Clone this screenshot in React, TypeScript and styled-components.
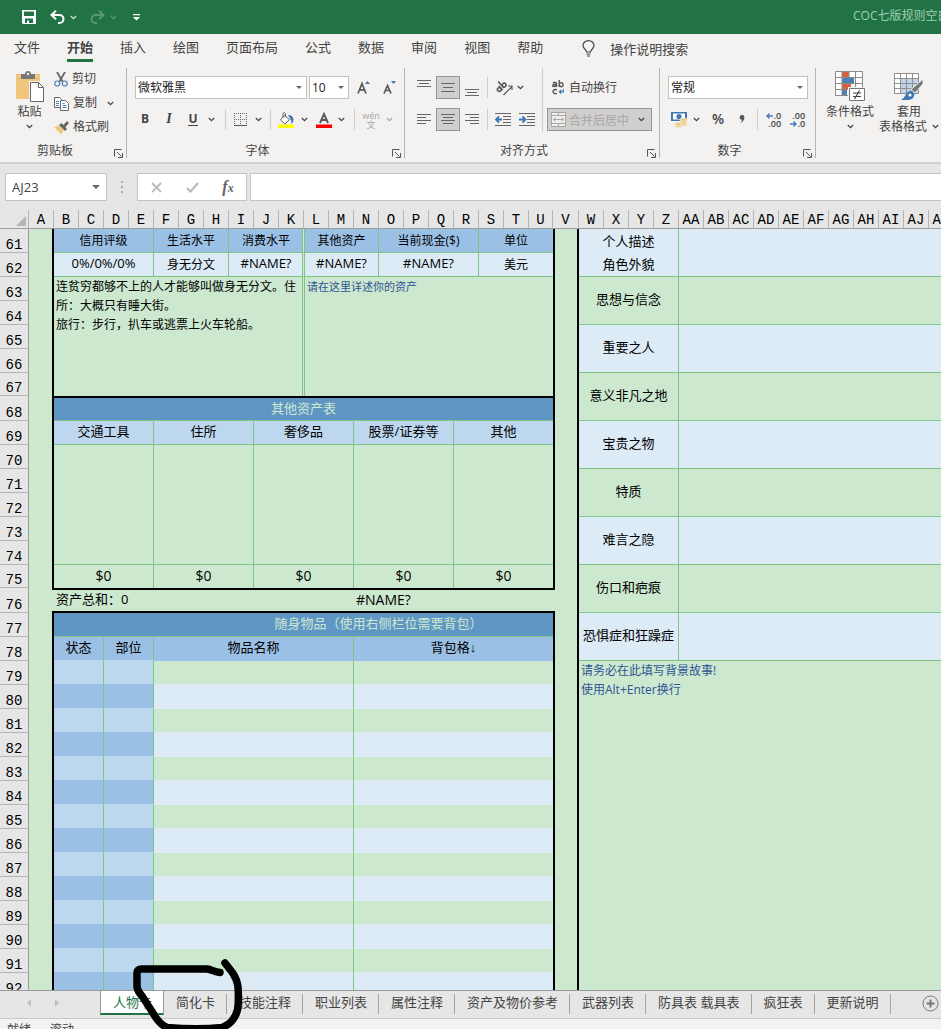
import React from "react";
import styled, { createGlobalStyle, css } from "styled-components";

const GREEN = "#217346";
const LINE = "#7fc588";
const C = {
  paper: "#cce8cf",
  mid: "#9bc0e6",
  light: "#bdd7ee",
  pale: "#ddebf7",
  title: "#6096c4",
  ink: "#305496",
};

const GlobalStyle = createGlobalStyle`
  *, *::before, *::after { box-sizing: border-box; }
  body {
    margin: 0;
    font-family: "Open Sans", "Liberation Sans", "Noto Sans CJK SC", sans-serif;
    font-size: 12px;
    color: #444;
    background: #e6e6e6;
  }
  button, input, select {
    font: inherit;
    color: inherit;
    margin: 0;
    padding: 0;
    border: 0;
    background: none;
    outline: none;
  }
  svg { display: block; flex: none; }
`;

const Window = styled.div`
  position: relative;
  display: flex;
  flex-direction: column;
  height: 100vh;
  overflow: hidden;
`;

/* ---------- title bar ---------- */

const TitleBar = styled.header`
  display: flex;
  align-items: center;
  flex: none;
  height: 34px;
  padding-left: 14px;
  background: ${GREEN};
  color: #fff;
`;

const QuickButton = styled.button<{ $w: number; $dim?: boolean; $start?: boolean }>`
  display: flex;
  align-items: center;
  justify-content: ${(p) => (p.$start ? "flex-start" : "center")};
  flex: none;
  width: ${(p) => p.$w}px;
  height: 24px;
  opacity: ${(p) => (p.$dim ? 0.25 : 1)};
`;

const DocTitle = styled.div`
  width: 88px;
  margin-left: auto;
  overflow: hidden;
  white-space: nowrap;
  line-height: 18px;
  padding-bottom: 3px;
  color: #9fcfb2;
`;

/* ---------- ribbon ---------- */

const RibbonTabs = styled.nav`
  display: flex;
  align-items: flex-start;
  gap: 27px;
  flex: none;
  height: 34px;
  padding: 4px 14px 0;
  background: #f3f2f1;
  font-size: 13px;
  white-space: nowrap;
`;

const RibbonTab = styled.button<{ $active?: boolean }>`
  flex: none;
  height: 24px;
  padding-bottom: 3px;
  line-height: 18px;
  border-bottom: 3px solid ${(p) => (p.$active ? GREEN : "transparent")};
  font-weight: ${(p) => (p.$active ? 700 : 400)};
`;

const TellMe = styled.button`
  display: flex;
  align-items: center;
  gap: 15px;
  height: 20px;
  margin-left: 12px;
`;

const Ribbon = styled.div`
  display: flex;
  flex: none;
  height: 96px;
  padding-bottom: 4px;
  background: #f3f2f1;
  border-bottom: 2px solid #d2d0ce;
  overflow: hidden;
`;

const Group = styled.section<{ $w?: number }>`
  display: flex;
  flex-direction: column;
  flex: ${(p) => (p.$w ? `0 0 ${p.$w}px` : "1 0 0")};
  border-right: ${(p) => (p.$w ? "1px solid #b5b3b1" : "0")};
`;

const GroupBody = styled.div<{ $pad?: number }>`
  display: flex;
  flex: 1;
  padding-left: ${(p) => p.$pad ?? 0}px;
`;

const GroupFooter = styled.div`
  display: flex;
  align-items: flex-end;
  height: 14px;
  text-align: center;
  line-height: 14px;
  padding-right: 2px;
  span { flex: 1; }
`;

const Launcher = styled.button`
  display: flex;
  align-items: flex-end;
  width: 14px;
  height: 14px;
  padding-left: 4px;
`;

const Rows = styled.div`
  display: flex;
  flex-direction: column;
  padding-top: 8px;
  gap: 9px;
`;

const ToolRow = styled.div<{ $gap?: number }>`
  display: flex;
  align-items: center;
  gap: ${(p) => p.$gap ?? 0}px;
  height: 23px;
`;

const Tool = styled.button<{ $w?: number; $on?: boolean; $dim?: boolean }>`
  display: flex;
  align-items: center;
  justify-content: center;
  flex: none;
  width: ${(p) => p.$w ?? 24}px;
  height: 23px;
  opacity: ${(p) => (p.$dim ? 0.45 : 1)};
  ${(p) =>
    p.$on &&
    css`
      background: #d0cfce;
      border: 1px solid #979593;
    `}
`;

const Letter = styled.span<{ $kind: "b" | "i" | "u" | "p" }>`
  font-size: 12px;
  line-height: 14px;
  font-weight: 700;
  padding-bottom: 2px;
  ${(p) =>
    p.$kind === "i" &&
    css`
      font-family: "Liberation Serif", serif;
      font-style: italic;
      font-size: 14px;
    `}
  ${(p) =>
    p.$kind === "u" &&
    css`
      padding-bottom: 0;
      line-height: 12px;
      border-bottom: 1px solid #444;
    `}
  ${(p) =>
    p.$kind === "p" &&
    css`
      font-size: 14px;
      font-weight: 600;
    `}
`;

const Rule = styled.span<{ $h?: number; $l?: number; $r?: number }>`
  flex: none;
  width: 1px;
  height: ${(p) => p.$h ?? 21}px;
  margin: 0 ${(p) => p.$r ?? 7}px 0 ${(p) => p.$l ?? 7}px;
  background: #cfcdcb;
`;

const Combo = styled.div<{ $w: number }>`
  display: flex;
  align-items: center;
  width: ${(p) => p.$w}px;
  height: 23px;
  padding: 0 4px 0 2px;
  background: #fff;
  border: 1px solid #c4c2c0;
  color: #222;
  select {
    flex: 1;
    min-width: 0;
    height: 21px;
    appearance: none;
  }
`;

const Triangle = styled.span<{ $s?: number }>`
  flex: none;
  border: ${(p) => p.$s ?? 3}px solid transparent;
  border-top-color: #666;
  border-bottom: 0;
`;

const BigButton = styled.button<{ $w: number }>`
  display: flex;
  flex-direction: column;
  align-items: center;
  width: ${(p) => p.$w}px;
  padding-top: 3px;
  line-height: 15px;
  white-space: nowrap;
  svg + span { margin-top: 2px; }
`;

const InlineLabel = styled.span`
  display: flex;
  align-items: center;
  gap: 5px;
  height: 15px;
`;

const ChevronSlot = styled.span`
  display: flex;
  align-items: center;
  height: 15px;
`;

const ClipList = styled.div`
  display: flex;
  flex-direction: column;
  padding-left: 7px;
`;

const ClipItem = styled.button`
  display: flex;
  align-items: center;
  height: 24px;
  gap: 4px;
  padding-bottom: 1px;
  white-space: nowrap;
  span { line-height: 16px; padding-bottom: 1px; }
  svg + span + svg { margin-left: 6px; }
`;

const WrapButton = styled.button`
  display: flex;
  align-items: center;
  gap: 5px;
  height: 23px;
  padding: 0 0 1px 5px;
`;

const MergeButton = styled.button`
  display: flex;
  align-items: center;
  width: 105px;
  height: 23px;
  padding: 0 6px 0 3px;
  gap: 3px;
  background: #d0cfce;
  border: 1px solid #979593;
  color: #a9a7a5;
  span { flex: 1; text-align: left; }
`;

const Pinyin = styled.span`
  display: flex;
  flex-direction: column;
  align-items: center;
  font-size: 9px;
  line-height: 9px;
`;

/* ---------- formula bar ---------- */

const FormulaBar = styled.div`
  display: flex;
  align-items: center;
  flex: none;
  height: 46px;
  padding: 0 0 0 5px;
  background: #e6e6e6;
`;

const NameBox = styled.div`
  display: flex;
  align-items: center;
  width: 102px;
  height: 28px;
  padding: 0 6px;
  background: #fff;
  border: 1px solid #c4c4c4;
  font-size: 13px;
  input { flex: 1; min-width: 0; }
`;

const Dots = styled.span`
  display: flex;
  flex-direction: column;
  gap: 3px;
  width: 30px;
  padding-left: 14px;
  i { width: 2px; height: 2px; background: #aaa; }
`;

const FxBox = styled.div`
  display: flex;
  align-items: center;
  width: 110px;
  height: 28px;
  background: #fff;
  border: 1px solid #c4c4c4;
`;

const Fx = styled.span`
  font: italic 700 16px/18px "Liberation Serif", serif;
  color: #666;
  small { font-size: 12px; }
`;

const FormulaInput = styled.input`
  && {
    flex: 1;
    min-width: 0;
    height: 28px;
    margin-left: 3px;
    padding: 0 6px;
    background: #fff;
    border: 1px solid #c4c4c4;
    border-right: 0;
  }
`;

/* ---------- grid ---------- */

const Pane = styled.main`
  flex: 1;
  min-height: 0;
  overflow: hidden;
  background: ${C.paper};
`;

const Grid = styled.table`
  table-layout: fixed;
  width: 1329px;
  border-collapse: separate;
  border-spacing: 0;
  color: #000;
`;

const SheetRow = styled.tr<{ $h: number }>`
  height: ${(p) => p.$h}px;
`;

const ColHead = styled.th`
  height: 19px;
  padding: 3px 0 0;
  background: #e6e6e6;
  border-right: 1px solid #b4b4b4;
  border-bottom: 1px solid #9c9c9c;
  font: 400 14px/15px "Liberation Mono", monospace;
  text-align: center;
`;

const Corner = styled(ColHead)`
  svg { margin: 0 2px 0 auto; }
`;

const RowHead = styled.th`
  padding: 8px 0 0;
  background: #e6e6e6;
  border-right: 1px solid #9c9c9c;
  border-bottom: 1px solid #b4b4b4;
  font: 400 14px/14px "Liberation Mono", monospace;
  text-align: center;
  vertical-align: bottom;
`;

type CellLook = {
  $bg?: string;
  $bottom?: string;
  $right?: string;
  $top?: string;
  $left?: string;
  $size?: number;
  $note?: boolean;
  $color?: string;
  $lh?: number;
  $double?: "start" | "end";
};

const Cell = styled.td<CellLook>`
  padding: ${(p) => (p.$note ? "0 0 0 2px" : p.$lh || p.$size === 12 ? "0" : "0 0 2px")};
  background: ${(p) => p.$bg ?? C.paper};
  border-top: ${(p) => p.$top ?? "0"};
  border-left: ${(p) => p.$left ?? "0"};
  border-right: ${(p) => p.$right ?? `1px solid ${LINE}`};
  border-bottom: ${(p) => p.$bottom ?? `1px solid ${LINE}`};
  color: ${(p) => p.$color ?? "#000"};
  font-size: ${(p) => p.$size ?? 13}px;
  line-height: ${(p) => p.$lh ?? 19}px;
  text-align: ${(p) => (p.$note ? "left" : "center")};
  vertical-align: ${(p) => (p.$note ? "top" : "middle")};
  white-space: pre-line;
  ${(p) =>
    p.$double === "start" &&
    css`
      border-right: 1px solid ${C.paper};
      box-shadow: inset -1px 0 ${LINE};
    `}
  ${(p) => p.$double === "end" && `border-left: 1px solid ${LINE};`}
`;

type Spec = CellLook & { t?: string; cs?: number; rs?: number };

const BLACK = "2px solid #000";
const NONE = "0";

/* paper with the ends of the two frame lines in its corners */
const frameEnds = (side: "left" | "right") =>
  `linear-gradient(#000, #000) ${side} top / 2px 2px no-repeat,
   linear-gradient(#000, #000) ${side} bottom / 2px 2px no-repeat, ${C.paper}`;

const columnName = (i: number) =>
  i < 26 ? String.fromCharCode(65 + i) : "A" + String.fromCharCode(65 + i - 26);
const columns = Array.from({ length: 52 }, (_, i) => columnName(i));
const columnWidth = (name: string) => (name === "U" ? 24 : name === "V" ? 26 : 25);
const rowNumbers = Array.from({ length: 32 }, (_, i) => 61 + i);

/* rows 68 and 76 carry the thick line above them */
const rowHeight = (n: number) =>
  n === 67 || n === 75 ? 23 : n === 68 || n === 76 ? 25 : 24;

const story = [
  "个人描述\n角色外貌",
  "思想与信念",
  "重要之人",
  "意义非凡之地",
  "宝贵之物",
  "特质",
  "难言之隐",
  "伤口和疤痕",
  "恐惧症和狂躁症",
];

const fiveUp = (texts: string[], look: Partial<Spec>): Spec[] =>
  texts.map((t, i) => ({ t, cs: 4, ...look, ...(i === 4 ? { $right: NONE } : {}) }));

const marginA: Spec = { $right: BLACK, $bottom: NONE };
const marginV: Spec = { $left: BLACK, $right: BLACK, $bottom: NONE };

function leftCells(row: number): Spec[] {
  switch (row) {
    case 61: {
      const h = { $bg: C.mid, $size: 12 };
      return [
        { ...marginA, rs: 15 },
        { t: "信用评级", cs: 4, ...h },
        { t: "生活水平", cs: 3, ...h },
        { t: "消费水平", cs: 3, ...h, $double: "start" },
        { t: "其他资产", cs: 3, ...h, $double: "end" },
        { t: "当前现金($)", cs: 4, ...h },
        { t: "单位", cs: 3, ...h, $right: NONE },
        { ...marginV, rs: 15 },
      ];
    }
    case 62: {
      const v = { $bg: C.pale };
      return [
        { t: "0%/0%/0%", cs: 4, ...v },
        { t: "身无分文", cs: 3, ...v, $size: 12 },
        { t: "#NAME?", cs: 3, ...v, $double: "start" },
        { t: "#NAME?", cs: 3, ...v, $double: "end" },
        { t: "#NAME?", cs: 4, ...v },
        { t: "美元", cs: 3, ...v, $size: 12, $right: NONE },
      ];
    }
    case 63:
      return [
        {
          t: "连贫穷都够不上的人才能够叫做身无分文。住所：大概只有睡大街。\n旅行：步行，扒车或逃票上火车轮船。",
          cs: 10, rs: 5, $note: true, $size: 12, $bottom: NONE, $double: "start",
        },
        {
          t: "请在这里详述你的资产",
          cs: 10, rs: 5, $note: true, $size: 11, $color: C.ink, $bottom: NONE, $right: NONE, $double: "end",
        },
      ];
    case 68:
      return [{ t: "其他资产表", cs: 20, $bg: C.title, $color: C.paper, $top: BLACK, $right: NONE }];
    case 69:
      return fiveUp(["交通工具", "住所", "奢侈品", "股票/证券等", "其他"], { $bg: C.light });
    case 70:
      return fiveUp(["", "", "", "", ""], { rs: 5 });
    case 75:
      return fiveUp(["$0", "$0", "$0", "$0", "$0"], { $bottom: NONE, $size: 14 });
    case 76: {
      const total = { $note: true, $right: NONE, $top: BLACK, $bottom: BLACK };
      return [
        { $right: NONE, $bottom: NONE, $bg: frameEnds("right") },
        { t: "资产总和：0", cs: 12, ...total },
        { t: "#NAME?", cs: 8, ...total, $size: 14 },
        { $right: BLACK, $bottom: NONE, $bg: frameEnds("left") },
      ];
    }
    case 77: {
      const bar = { $bg: C.title, $color: C.paper, $right: NONE };
      return [
        { ...marginA, rs: 16 },
        { cs: 6, ...bar },
        { t: "随身物品（使用右侧栏位需要背包）", cs: 14, ...bar },
        { ...marginV, rs: 16 },
      ];
    }
    case 78: {
      const h = { $bg: C.mid };
      const last = `1px solid ${C.mid}`;
      const next = `1px solid ${C.light}`;
      return [
        { t: "状态", cs: 2, ...h, $bottom: next },
        { t: "部位", cs: 2, ...h, $bottom: next },
        { t: "物品名称", cs: 8, ...h, $bottom: last },
        { t: "背包格↓", cs: 8, ...h, $bottom: last, $right: NONE },
      ];
    }
  }
  if (row >= 79) {
    const odd = row % 2 === 1;
    const slot = { $bg: odd ? C.light : C.mid, $bottom: `1px solid ${odd ? C.mid : C.light}` };
    const item = { $bg: odd ? C.paper : C.pale, $bottom: `1px solid ${C.pale}` };
    return [
      { cs: 2, ...slot },
      { cs: 2, ...slot },
      { cs: 8, ...item },
      { cs: 8, ...item, $right: NONE },
    ];
  }
  return [];
}

function rightCells(row: number): Spec[] {
  const i = (row - 61) / 2;
  if (row < 79 && Number.isInteger(i)) {
    const $bg = i % 2 ? C.paper : C.pale;
    return [
      { t: story[i], cs: 4, rs: 2, $bg, $lh: i === 0 ? 23 : undefined },
      { cs: 26, rs: 2, $bg },
    ];
  }
  if (row === 79) {
    return [
      {
        t: "请务必在此填写背景故事!\n使用Alt+Enter换行",
        cs: 30, rs: 14, $note: true, $size: 12, $color: C.ink, $bottom: NONE,
      },
    ];
  }
  return [];
}

/* ---------- sheet tabs and status bar ---------- */

const SheetBar = styled.nav`
  display: flex;
  align-items: flex-start;
  flex: none;
  height: 29px;
  background: #e6e6e6;
  border-top: 1px solid #999;
  border-bottom: 1px solid #c8c6c4;
  font-size: 13px;
  white-space: nowrap;
`;

const SheetNav = styled.div`
  display: flex;
  align-items: center;
  gap: 22px;
  width: 100px;
  height: 24px;
  padding-left: 26px;
  button { width: 6px; }
`;

const SheetTab = styled.button<{ $active?: boolean }>`
  display: flex;
  align-items: center;
  flex: none;
  height: 24px;
  padding: 0 12px 4px;
  position: relative;
  &::after {
    content: "";
    position: absolute;
    right: 0;
    top: 3px;
    width: 1px;
    height: 20px;
    background: #a3a3a3;
  }
  ${(p) =>
    p.$active &&
    css`
      padding-bottom: 2px;
      background: #fff;
      color: ${GREEN};
      border-left: 1px solid #999;
      border-bottom: 2px solid ${GREEN};
      &::after { top: 0; height: 24px; background: #999; }
    `}
`;

const AddSheet = styled.button`
  margin: 4px 2px 0 auto;
`;

const StatusBar = styled.footer`
  display: flex;
  gap: 19px;
  flex: none;
  height: 10px;
  padding: 0 7px;
  background: #f3f2f1;
  line-height: 21px;
  overflow: hidden;
`;

const Marker = styled.svg`
  position: absolute;
  left: 130px;
  bottom: 0;
  pointer-events: none;
`;

/* ---------- icons ---------- */

const Chevron = ({ c = "#444" }: { c?: string }) => (
  <svg width="7" height="5" viewBox="0 0 7 5">
    <path d="M.8 1l2.7 2.6L6.200 1" fill="none" stroke={c} strokeWidth="1.3" />
  </svg>
);

const Lines = ({ spans, color = "#666", h = 13 }: { spans: [number, number, number][]; color?: string; h?: number }) => (
  <svg width="14" height={h} viewBox={`0 0 14 ${h}`} shapeRendering="crispEdges">
    {spans.map(([x, y, w]) => (
      <rect key={y} x={x} y={y} width={w} height="1" fill={color} />
    ))}
  </svg>
);

const LauncherIcon = () => (
  <svg width="9" height="9" viewBox="0 0 9 9" fill="none" stroke="#555">
    <path d="M.5 7.500V.5H7.500M3 3l4.500 4.500M8.500 4v4.500H4" />
  </svg>
);

const SaveIcon = () => (
  <svg width="14" height="14" viewBox="0 0 14 14">
    <path fill="#fff" fillRule="evenodd" d="M0 0h14v14H1l-1-1zM2 1.500v4.500h10V1.500zM3 8.500V13h2v-2.500h2V13h4V8.500z" />
  </svg>
);

const UndoIcon = ({ flip }: { flip?: boolean }) => (
  <svg width="15" height="14" viewBox="0 0 15 14" fill="none" stroke="#fff" strokeWidth="2">
    <g transform={flip ? "matrix(-1 0 0 1 15 0)" : undefined}>
      <path d="M6 .8L1.500 5 6 9.200M2 5h7.500a4 4 0 0 1 0 8H8" />
    </g>
  </svg>
);

const CustomizeIcon = () => (
  <svg width="7" height="7" viewBox="0 0 7 7" fill="#fff">
    <path d="M0 0h7v1.200H0zM0 3h7L3.500 6.600z" />
  </svg>
);

const BulbIcon = () => (
  <svg width="13" height="17" viewBox="0 0 13 17" fill="none" stroke="#444" strokeWidth="1.200">
    <path d="M4.500 12c0-2.500-3.500-3.200-3.500-6.400a5.500 5 0 0 1 11 0c0 3.200-3.500 3.900-3.500 6.400zM4.500 14h4M5 16h3" />
  </svg>
);

const PasteIcon = () => (
  <svg width="28" height="31" viewBox="0 0 28 31">
    <path fill="#efc67c" d="M0 3h24v25H0z" />
    <path fill="#777" d="M5 3h4a3 3 0 0 1 6 0h4v5H5z" />
    <circle cx="12" cy="3" r="1.200" fill="#f3f2f1" />
    <path fill="#fff" stroke="#f3f2f1" strokeWidth="3" d="M14.500 11.500h8l5 5v14h-13z" />
    <path fill="#fff" stroke="#666" d="M14.500 11.500h8l5 5v14h-13zM22.500 11.500v5h5" />
  </svg>
);

const CutIcon = () => (
  <svg width="14" height="15" viewBox="0 0 14 15" fill="none">
    <path d="M3 0l5.500 9.500M11 0L5.500 9.500" stroke="#666" strokeWidth="1.800" />
    <circle cx="3.200" cy="11.500" r="2.500" stroke="#4a7fb8" strokeWidth="1.200" />
    <circle cx="10.800" cy="11.500" r="2.500" stroke="#4a7fb8" strokeWidth="1.200" />
  </svg>
);

const CopyIcon = () => (
  <svg width="15" height="14" viewBox="0 0 15 14" fill="#fff" stroke="#666">
    <path d="M.5.500h5l2 2v8h-7z" />
    <path d="M2 4.500h3M2 6.500h3M2 8.500h3" stroke="#4a7fb8" />
    <path d="M6.500 3.500h5l3 3v7h-8z" />
    <path d="M8.500 6.500h2M8.500 8.500h4M8.500 10.500h4" stroke="#4a7fb8" />
  </svg>
);

const BrushIcon = () => (
  <svg width="15" height="14" viewBox="0 0 15 14">
    <path fill="#efc67c" d="M0 6l5-1.500 4.500 5L7 13.500z" />
    <path fill="#666" d="M5 4l2.500-2L9.500 4 13 0l2 2-3.500 4L13 8l-2 2z" />
  </svg>
);

const GrowFont = ({ down }: { down?: boolean }) => (
  <svg width="14" height="15" viewBox="0 0 14 15">
    <path
      d={down ? "M1 13.500L4.500 5.500 8 13.500M2.500 10.500H6.500" : "M1 13.500L5 3.500 9 13.500M2.500 9.800H7.500"}
      fill="none" stroke="#5a5a5a" strokeWidth="1.700"
    />
    <path d={down ? "M8 1h5l-2.500 3z" : "M8 4h5L10.500 1z"} fill="#3f77b5" />
  </svg>
);

const BorderIcon = () => (
  <svg width="13" height="13" viewBox="0 0 13 13" shapeRendering="crispEdges" fill="none">
    <path d="M0 .5h13M0 6.500h13M.5 0v11M6.500 0v11M12.500 0v11" stroke="#666" strokeDasharray="1 1" />
    <path d="M0 12.500h13" stroke="#555" />
  </svg>
);

const FillIcon = () => (
  <svg width="16" height="16" viewBox="0 0 16 16">
    <path d="M6 3.500L11.500 7.500 7 12 2.500 8z" fill="#fff" stroke="#666" />
    <path d="M5 6V1.500q1.500-2 2.500 0V5" fill="none" stroke="#666" />
    <path d="M10 3q5 0 5.500 4.500 0 3-2 4.500 0-4-1.500-5.500z" fill="#3f77b5" />
    <path fill="#ff0" d="M0 12.500h16V16H0z" />
  </svg>
);

const FontColorIcon = () => (
  <svg width="16" height="16" viewBox="0 0 16 16">
    <path d="M4 11L8 2l4 9M5.500 8h5" fill="none" stroke="#5a5a5a" strokeWidth="1.900" />
    <path fill="#f00" d="M0 12.500h16V16H0z" />
  </svg>
);

const OrientIcon = () => (
  <svg width="17" height="16" viewBox="0 0 17 16" fill="none" stroke="#555" strokeWidth="1.500">
    <g transform="rotate(-42 6 8)">
      <path d="M5 4.500V10M7.500.500v9" />
      <circle cx="3" cy="7.300" r="1.900" />
      <circle cx="9.500" cy="7.300" r="1.900" />
    </g>
    <path d="M7.500 15L15.500 7M12 6h4v4" strokeWidth="1.200" />
  </svg>
);

const IndentIcon = ({ right }: { right?: boolean }) => (
  <svg width="16" height="13" viewBox="0 0 16 13">
    <path d="M0 .5h16M8 3.500h8M8 6.500h8M8 9.500h8M0 12.500h16" stroke="#666" shapeRendering="crispEdges" />
    <path
      d={right ? "M0 6.500h6M3.500 3.500l3 3-3 3" : "M7 6.500H1M4 3.500l-3 3 3 3"}
      fill="none" stroke="#3f77b5" strokeWidth="1.800"
    />
  </svg>
);

const WrapIcon = () => (
  <svg width="12" height="15" viewBox="0 0 12 15" fill="none" stroke="#555" strokeWidth="1.400">
    <path d="M.8 2.800q3.700-1 3.700 1V7M4.500 4.500q-4-.2-3.900 1.200.500 1.800 3.900 0M7.200 0v7M7.200 4.500a2 2 0 1 1 0 .4M5 9.800q-3.800-1-3.900 1.800.100 2.800 3.900 1.800" />
    <path d="M11.300 9v2.800H7.500M9.200 10L7.400 11.800 9.200 13.600" stroke="#3f77b5" strokeWidth="1.200" />
  </svg>
);

const MergeIcon = () => (
  <svg width="15" height="15" viewBox="0 0 15 15" fill="none" stroke="#a9a7a5">
    <path d="M.5.500h14v14H.5zM.5 3.500h14M.5 11.500h14M7.500.500v3M7.500 11.500v3" fill="#f0efee" />
    <path d="M2.500 7.500h10M4.500 5.500l-2 2 2 2M10.500 5.500l2 2-2 2" />
  </svg>
);

const MoneyIcon = () => (
  <svg width="17" height="16" viewBox="0 0 17 16">
    <path fill="#3f77b5" d="M0 0h16v9H0z" />
    <path fill="#fff" d="M2 1.500h12v6H2z" />
    <circle cx="8" cy="4.500" r="2.600" fill="#3f77b5" />
    <g fill="#efc67c" stroke="#f3f2f1" strokeWidth=".7">
      <ellipse cx="12.500" cy="12.300" rx="3.800" ry="1.700" />
      <ellipse cx="12.500" cy="10" rx="3.800" ry="1.700" />
      <ellipse cx="12.500" cy="7.700" rx="3.800" ry="1.700" />
      <ellipse cx="7.500" cy="14" rx="3.500" ry="1.600" />
      <ellipse cx="7.500" cy="12" rx="3.500" ry="1.600" />
    </g>
  </svg>
);

const CommaIcon = () => (
  <svg width="6" height="9" viewBox="0 0 6 9">
    <path fill="#555" d="M3 0a2.400 2.400 0 0 1 2.400 2.500Q5.200 6.500 1 8q1.800-1.500 2-3.200A2.400 2.400 0 1 1 3 0z" />
  </svg>
);

const Decimal = styled.span`
  display: grid;
  justify-items: end;
  width: 15px;
  font-size: 9px;
  line-height: 8px;
  font-weight: 600;
  span { display: flex; align-items: center; gap: 1px; height: 8px; }
`;

const TinyArrow = ({ right }: { right?: boolean }) => (
  <svg width="7" height="6" viewBox="0 0 7 6" fill="none" stroke="#3f77b5" strokeWidth="1.300">
    <path d={right ? "M0 3h6M3.500.500L6 3 3.500 5.500" : "M7 3H1M3.500.500L1 3l2.500 2.500"} />
  </svg>
);

const CondIcon = () => (
  <svg width="30" height="31" viewBox="0 0 30 31">
    <path fill="#fff" d="M.5.500h27v24H.5z" />
    <path fill="#d65f3d" d="M7 1h7v6H7zM7 13h9v6H7z" />
    <path fill="#4a7fb8" d="M7 7h12v6H7zM7 19h5v6H7z" />
    <path d="M.5.500h27v24H.5zM7 .5v24M14 .5v6M20.500.500v24M.5 6.500h27M.5 12.500h27M.5 18.500h27" fill="none" stroke="#8a8a8a" />
    <path fill="#fff" stroke="#f3f2f1" strokeWidth="3" d="M14.500 17.500h15v12h-15z" />
    <path fill="#fff" stroke="#777" d="M14.500 17.500h15v12h-15z" />
    <path d="M18 22h8M18 25.500h8M24.500 19.500l-5 8.500" stroke="#444" strokeWidth="1.200" />
  </svg>
);

const TableFormatIcon = () => (
  <svg width="30" height="31" viewBox="0 0 30 31">
    <path fill="#fff" d="M.5 2.500h24v20H.5z" />
    <path fill="#c0d3e9" d="M7 8h17.500v14.500H7z" />
    <path d="M.5 2.500h24v20H.5zM6.500 2.500v20M12.500 2.500v20M18.500 2.500v20M.5 7.500h24M.5 12.500h24M.5 17.500h24" fill="none" stroke="#8f8f8f" />
    <path d="M29 8v5l-8 9-4-3.500z" fill="#777" stroke="#f3f2f1" />
    <path d="M17 19.500l3.500 3q0 6-6.500 6.500H7q3-1.500 4.500-5t5.500-4.500z" fill="#3f77b5" />
    <circle cx="16" cy="24" r="1.600" fill="#fff" />
  </svg>
);

const CornerIcon = () => (
  <svg width="10" height="10" viewBox="0 0 10 10"><path d="M10 0v10H0z" fill="#b4b4b4" /></svg>
);

/* ---------- page ---------- */

const Footer = ({ label }: { label: string }) => (
  <GroupFooter>
    <span>{label}</span>
    <Launcher aria-label={`${label}设置`}><LauncherIcon /></Launcher>
  </GroupFooter>
);

const More = ({ w = 13, label, c }: { w?: number; label: string; c?: string }) => (
  <Tool $w={w} aria-label={label}><Chevron c={c} /></Tool>
);

const tabs = ["文件", "开始", "插入", "绘图", "页面布局", "公式", "数据", "审阅", "视图", "帮助"];
const sheets = [
  "人物卡", "简化卡", "技能注释", "职业列表", "属性注释", "资产及物价参考",
  "武器列表", "防具表 载具表", "疯狂表", "更新说明",
];

export default function App() {
  return (
    <Window>
      <GlobalStyle />
      <TitleBar>
        <QuickButton $w={30} aria-label="保存"><SaveIcon /></QuickButton>
        <QuickButton $w={26} aria-label="撤消"><UndoIcon /></QuickButton>
        <QuickButton $w={14} $start aria-label="撤消列表"><Chevron c="#d5e6dc" /></QuickButton>
        <QuickButton $w={26} $dim aria-label="恢复"><UndoIcon flip /></QuickButton>
        <QuickButton $w={14} $start $dim aria-label="恢复列表"><Chevron c="#fff" /></QuickButton>
        <QuickButton $w={24} aria-label="自定义快速访问工具栏"><CustomizeIcon /></QuickButton>
        <DocTitle>COC七版规则空白卡</DocTitle>
      </TitleBar>

      <RibbonTabs>
        {tabs.map((t) => (
          <RibbonTab key={t} $active={t === "开始"}>{t}</RibbonTab>
        ))}
        <TellMe><BulbIcon />操作说明搜索</TellMe>
      </RibbonTabs>

      <Ribbon>
        <Group $w={127}>
          <GroupBody $pad={12}>
            <BigButton $w={35}>
              <PasteIcon />
              <span>粘贴</span>
              <ChevronSlot><Chevron /></ChevronSlot>
            </BigButton>
            <ClipList>
              <ClipItem><CutIcon /><span>剪切</span></ClipItem>
              <ClipItem><CopyIcon /><span>复制</span><Chevron /></ClipItem>
              <ClipItem><BrushIcon /><span>格式刷</span></ClipItem>
            </ClipList>
          </GroupBody>
          <Footer label="剪贴板" />
        </Group>

        <Group $w={278}>
          <GroupBody $pad={6}>
            <Rows>
              <ToolRow $gap={2}>
                <span />
                <Combo $w={172}>
                  <select aria-label="字体"><option>微软雅黑</option></select>
                  <Triangle />
                </Combo>
                <Combo $w={40}>
                  <select aria-label="字号"><option>10</option></select>
                  <Triangle />
                </Combo>
                <Tool $w={26} aria-label="增大字号"><GrowFont /></Tool>
                <Tool $w={22} aria-label="减小字号"><GrowFont down /></Tool>
              </ToolRow>
              <ToolRow>
                <Tool aria-label="加粗"><Letter $kind="b">B</Letter></Tool>
                <Tool aria-label="倾斜"><Letter $kind="i">I</Letter></Tool>
                <Tool aria-label="下划线"><Letter $kind="u">U</Letter></Tool>
                <More label="下划线样式" />
                <Rule $r={2} />
                <Tool $w={24} aria-label="边框"><BorderIcon /></Tool>
                <More label="边框样式" />
                <Rule $r={3} $l={5} />
                <Tool $w={24} aria-label="填充颜色"><FillIcon /></Tool>
                <More label="更多填充颜色" />
                <Tool $w={26} aria-label="字体颜色"><FontColorIcon /></Tool>
                <More label="更多字体颜色" w={9} />
                <Rule $r={4} $l={8} />
                <Tool $w={24} $dim aria-label="拼音"><Pinyin><span>wén</span><span>文</span></Pinyin></Tool>
                <More label="拼音选项" w={12} c="#a9a7a5" />
              </ToolRow>
            </Rows>
          </GroupBody>
          <Footer label="字体" />
        </Group>

        <Group $w={255}>
          <GroupBody $pad={7}>
            <Rows>
              <ToolRow>
                <Tool aria-label="顶端对齐"><Lines spans={[[0, 0, 14], [2, 3, 10], [0, 6, 14]]} h={16} /></Tool>
                <Tool $w={24} $on aria-label="垂直居中"><Lines spans={[[0, 2, 14], [2, 6, 10], [0, 10, 14]]} /></Tool>
                <Tool aria-label="底端对齐"><Lines spans={[[0, 9, 14], [2, 12, 10], [0, 15, 14]]} h={16} /></Tool>
                <Rule $l={3} $r={6} />
                <Tool $w={20} aria-label="方向"><OrientIcon /></Tool>
                <More label="方向选项" />
              </ToolRow>
              <ToolRow>
                <Tool aria-label="左对齐"><Lines spans={[[0, 1, 14], [0, 4, 9], [0, 7, 14], [0, 10, 9]]} /></Tool>
                <Tool $w={24} $on aria-label="居中"><Lines spans={[[0, 1, 14], [2, 4, 10], [0, 7, 14], [2, 10, 10]]} /></Tool>
                <Tool aria-label="右对齐"><Lines spans={[[0, 1, 14], [5, 4, 9], [0, 7, 14], [5, 10, 9]]} /></Tool>
                <Rule $l={3} $r={3} />
                <Tool aria-label="减少缩进量"><IndentIcon /></Tool>
                <Tool aria-label="增加缩进量"><IndentIcon right /></Tool>
              </ToolRow>
            </Rows>
            <Rule $h={64} $l={3} $r={4} />
            <Rows>
              <ToolRow><WrapButton><WrapIcon />自动换行</WrapButton></ToolRow>
              <ToolRow><MergeButton><MergeIcon /><span>合并后居中</span><Chevron /></MergeButton></ToolRow>
            </Rows>
          </GroupBody>
          <Footer label="对齐方式" />
        </Group>

        <Group $w={156}>
          <GroupBody $pad={8}>
            <Rows>
              <ToolRow>
                <Combo $w={140}>
                  <select aria-label="数字格式"><option>常规</option></select>
                  <Triangle />
                </Combo>
              </ToolRow>
              <ToolRow>
                <Tool $w={22} aria-label="会计数字格式"><MoneyIcon /></Tool>
                <More label="更多货币" />
                <Tool $w={30} aria-label="百分比样式"><Letter $kind="p">%</Letter></Tool>
                <Tool $w={18} aria-label="千位分隔样式"><CommaIcon /></Tool>
                <Rule $l={6} $r={3} />
                <Tool aria-label="增加小数位数">
                  <Decimal><span><TinyArrow />.0</span><span>.00</span></Decimal>
                </Tool>
                <Tool aria-label="减少小数位数">
                  <Decimal><span>.00</span><span><TinyArrow right />.0</span></Decimal>
                </Tool>
              </ToolRow>
            </Rows>
          </GroupBody>
          <Footer label="数字" />
        </Group>

        <Group>
          <GroupBody $pad={4}>
            <BigButton $w={60}>
              <CondIcon />
              <span>条件格式</span>
              <ChevronSlot><Chevron /></ChevronSlot>
            </BigButton>
            <BigButton $w={58}>
              <TableFormatIcon />
              <span>套用</span>
              <InlineLabel>表格格式<Chevron /></InlineLabel>
            </BigButton>
          </GroupBody>
        </Group>
      </Ribbon>

      <FormulaBar>
        <NameBox>
          <input aria-label="名称框" defaultValue="AJ23" />
          <Triangle $s={4} />
        </NameBox>
        <Dots><i /><i /><i /></Dots>
        <FxBox>
          <Tool $w={36} aria-label="取消">
            <svg width="11" height="11" viewBox="0 0 11 11"><path d="M1 1l9 9M10 1l-9 9" stroke="#bbb" strokeWidth="1.800" /></svg>
          </Tool>
          <Tool $w={36} aria-label="输入">
            <svg width="13" height="11" viewBox="0 0 13 11"><path d="M1 6l3.500 3.500L12 1" fill="none" stroke="#bbb" strokeWidth="2.200" /></svg>
          </Tool>
          <Tool $w={36} aria-label="插入函数"><Fx>f<small>x</small></Fx></Tool>
        </FxBox>
        <FormulaInput aria-label="编辑栏" />
      </FormulaBar>

      <Pane>
        <Grid>
          <colgroup>
            <col width={29} />
            {columns.map((c) => <col key={c} width={columnWidth(c)} />)}
          </colgroup>
          <thead>
            <tr>
              <Corner aria-label="全选"><CornerIcon /></Corner>
              {columns.map((c) => <ColHead key={c} scope="col">{c}</ColHead>)}
            </tr>
          </thead>
          <tbody>
            {rowNumbers.map((n) => (
              <SheetRow key={n} $h={rowHeight(n)}>
                <RowHead scope="row">{n}</RowHead>
                {[...leftCells(n), ...rightCells(n)].map(({ t, cs, rs, ...look }, i) => (
                  <Cell key={i} colSpan={cs} rowSpan={rs} {...look}>{t}</Cell>
                ))}
              </SheetRow>
            ))}
          </tbody>
        </Grid>
      </Pane>

      <SheetBar>
        <SheetNav>
          <button aria-label="上一张工作表">
            <svg width="6" height="8" viewBox="0 0 6 8"><path d="M5 0v8L1 4z" fill="#c0c0c0" /></svg>
          </button>
          <button aria-label="下一张工作表">
            <svg width="6" height="8" viewBox="0 0 6 8"><path d="M1 0v8l4-4z" fill="#c0c0c0" /></svg>
          </button>
        </SheetNav>
        {sheets.map((s, i) => <SheetTab key={s} $active={i === 0}>{s}</SheetTab>)}
        <AddSheet aria-label="新工作表">
          <svg width="17" height="17" viewBox="0 0 17 17" fill="none" stroke="#777">
            <circle cx="8.500" cy="8.500" r="7.500" />
            <path d="M8.500 4.500v8M4.500 8.500h8" strokeWidth="2" />
          </svg>
        </AddSheet>
      </SheetBar>
      <StatusBar><span>就绪</span><span>滚动</span></StatusBar>

      <Marker width="115" height="74" viewBox="130 955 115 74">
        <path
          d="M220 972.500C214 972 212 969.500 207 969H141Q136.500 969 137 974V987Q138 992 142 996L153 1013Q159 1024 167 1027.500Q198 1030 222 1027.500Q234 1023 237.500 1010Q239 1000 238 987Q237 979 232 972L225 963"
          fill="none" stroke="#000" strokeWidth="7.500" strokeLinecap="round" strokeLinejoin="round"
        />
      </Marker>
    </Window>
  );
}
